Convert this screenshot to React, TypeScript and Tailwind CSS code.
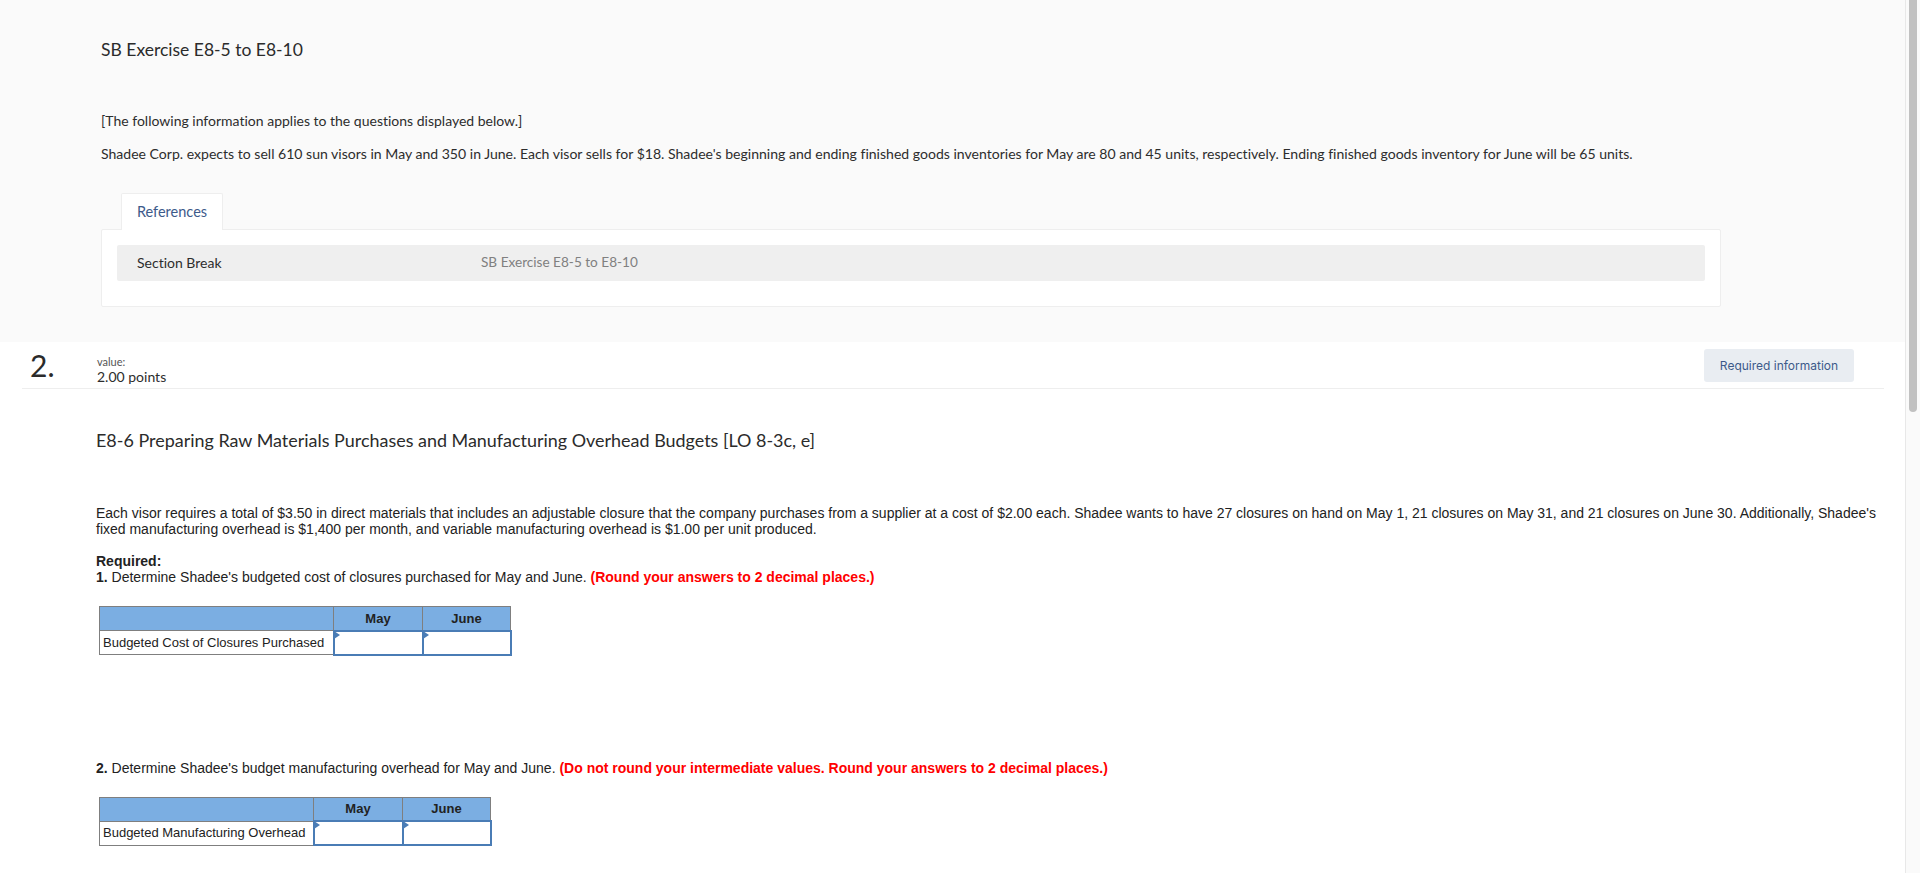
const heading = "font-['Lato','Open_Sans',sans-serif] [font-variant-ligatures:none]";

function BudgetTable({ label, labelWidth }: { label: string; labelWidth: string }) {
  return (
    <table className="ml-[3px] border-collapse font-['Liberation_Sans',Arial,sans-serif] text-[13px] text-[#222]">
      <tbody>
        <tr className="h-[24px] bg-[#7baee2]">
          <th className={`${labelWidth} border border-[#7f7f7f]`} />
          <th className="w-[89px] border border-[#7f7f7f] pt-[1px] text-center font-bold">May</th>
          <th className="w-[88px] border border-[#7f7f7f] pt-[1px] text-center font-bold">June</th>
        </tr>
        <tr className="h-[24px]">
          <td className="border border-[#7f7f7f] pl-[3px] whitespace-nowrap">{label}</td>
          <InputCell />
          <InputCell />
        </tr>
      </tbody>
    </table>
  );
}

function InputCell() {
  return (
    <td className="relative border-2 border-[#4a7cb5] bg-white p-0">
      <span className="absolute -top-[1px] -left-[1px] h-0 w-0 border-y-[4px] border-l-[6px] border-y-transparent border-l-[#4a7cb5]" />
    </td>
  );
}

export default function App() {
  return (
    <div className="flex h-[873px] w-[1920px] overflow-hidden bg-white text-[#2d2d2d]">
      <div className="w-[1905px] shrink-0">
        <section className={`${heading} h-[342px] bg-[#fafafa] pt-[38px] pl-[101px]`}>
          <h1 className="text-[17.5px] leading-[24px] font-normal text-[#2b2b2b]">SB Exercise E8-5 to E8-10</h1>
          <p className="mt-[49px] text-[14px] leading-[20px]">[The following information applies to the questions displayed below.]</p>
          <p className="mt-[13px] text-[14.06px] leading-[20px]">
            Shadee Corp. expects to sell 610 sun visors in May and 350 in June. Each visor sells for $18. Shadee's beginning and ending finished goods inventories for May are 80 and 45 units, respectively. Ending finished goods inventory for June will be 65 units.
          </p>

          <div className="relative z-10 mt-[29px] ml-[20px] flex h-[37px] w-[102px] items-center justify-center rounded-t-[2px] border border-b-0 border-[#eeeeee] bg-white text-[14.5px] text-[#3d5a8a]">
            References
          </div>
          <div className="-mt-px h-[78px] w-[1620px] rounded-[2px] border border-[#eeeeee] bg-white px-[15px] pt-[15px]">
            <div className="flex h-[36px] items-center rounded-[2px] bg-[#efefef] pb-[1px] pl-[20px] text-[14px]">
              <span className="w-[344px]">Section Break</span>
              <span className="text-[13.6px] text-[#808080]">SB Exercise E8-5 to E8-10</span>
            </div>
          </div>
        </section>

        <div className="mx-[22px] flex h-[47px] w-[1862px] items-start border-b border-[#eeeeee]">
          <div className={`${heading} w-[75px] pt-[3px] pl-[8px] text-[30px] leading-[40px] text-[#2b2b2b]`}>2.</div>
          <div className={`${heading} flex-1 pt-[13px]`}>
            <div className="text-[11px] leading-[13px] text-[#555]">value:</div>
            <div className="text-[14px] leading-[17px]">2.00 points</div>
          </div>
          <div className="mt-[7px] mr-[30px] flex h-[33px] w-[150px] items-center justify-center rounded-[3px] bg-[#e9edf2] font-['Inter',sans-serif] text-[12px] text-[#3d5a8a]">
            Required information
          </div>
        </div>

        <div className="pl-[96px]">
          <h2 className={`${heading} mt-[39px] text-[17.95px] leading-[24px] font-normal text-[#2b2b2b]`}>
            E8-6 Preparing Raw Materials Purchases and Manufacturing Overhead Budgets [LO 8-3c, e]
          </h2>
          <div className="mt-[53px] font-['Liberation_Sans',Arial,sans-serif] text-[14px] leading-[16px] text-[#222]">
            <p className="pr-[8px]">
              Each visor requires a total of $3.50 in direct materials that includes an adjustable closure that the company purchases from a supplier at a cost of $2.00 each. Shadee wants to have 27 closures on hand on May 1, 21 closures on May 31, and 21 closures on June 30. Additionally, Shadee's fixed manufacturing overhead is $1,400 per month, and variable manufacturing overhead is $1.00 per unit produced.
            </p>
            <p className="mt-[16px] font-bold">Required:</p>
            <p>
              <b>1.</b> Determine Shadee's budgeted cost of closures purchased for May and June. <b className="text-[#ff0000]">(Round your answers to 2 decimal places.)</b>
            </p>
            <div className="mt-[21px]">
              <BudgetTable label="Budgeted Cost of Closures Purchased" labelWidth="w-[234px]" />
            </div>
            <p className="mt-[104px]">
              <b>2.</b> Determine Shadee's budget manufacturing overhead for May and June. <b className="text-[#ff0000]">(Do not round your intermediate values. Round your answers to 2 decimal places.)</b>
            </p>
            <div className="mt-[21px]">
              <BudgetTable label="Budgeted Manufacturing Overhead" labelWidth="w-[214px]" />
            </div>
          </div>
        </div>
      </div>

      <div className="w-[15px] shrink-0 border-l border-[#e8e8e8] bg-[#fafafa] pr-[3px] pl-[3px]">
        <div className="h-[412px] rounded-b-[4px] bg-[#c1c1c1]" />
      </div>
    </div>
  );
}
